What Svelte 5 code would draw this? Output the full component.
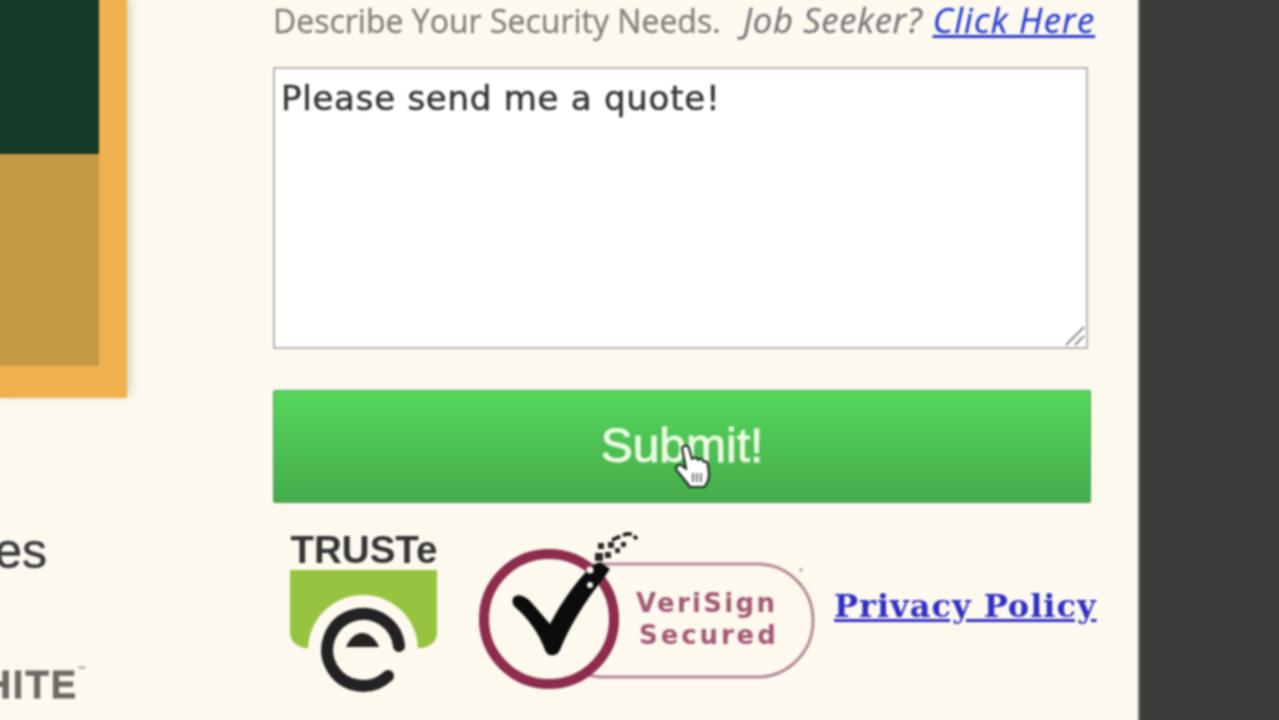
<script>
  let message = $state('Please send me a quote!')
</script>

<div class="page">
  <main class="panel">
    <aside class="side">
      <div class="promo">
        <div class="promo-dark"></div>
        <div class="promo-tan"></div>
      </div>
      <div class="side-label"><span>Services</span></div>
      <div class="side-brand"><span>WHITE<sup>™</sup></span></div>
    </aside>

    <form class="form" onsubmit={(e) => e.preventDefault()}>
      <p class="prompt">Describe Your Security Needs. <em>Job Seeker?</em> <a href="#jobs">Click Here</a></p>

      <div class="field">
        <textarea bind:value={message} aria-label="Security needs"></textarea>
        <svg class="grip" viewBox="0 0 20 20" aria-hidden="true">
          <path d="M1 19 19 1M10 19 19 10" />
        </svg>
      </div>

      <div class="submit-wrap">
        <button class="submit" type="submit">Submit!</button>
        <svg class="cursor" viewBox="0 0 36 48" aria-hidden="true">
          <path d="M8 6c1-3 6-3 7 0l3 11c2-2 5-2 6 1 2-2 5-1 6 2 2-1 4 0 4 3l1 9c0 6-2 10-5 13H16C12 40 8 34 3 29c-2-3 0-7 3-6 2 0 4 2 6 4Z" />
          <path class="lines" d="M19 31v9M23 31v9M27 31v9" />
        </svg>
      </div>

      <div class="seals">
        <div class="truste">
          <div class="truste-name">TRUSTe</div>
          <svg class="truste-mark" viewBox="0 0 148 122" aria-hidden="true">
            <path class="truste-green" d="M0 0h147v62c0 9-6 15-16 16H16C6 77 0 71 0 62Z" />
            <path class="truste-arch" d="M18 80a55 55 0 0 1 110 0Z" />
            <path class="truste-e" d="M109 76A36 36 0 1 0 98 106" />
            <path class="truste-dome" d="M56 77c4-9 10-14 16-14 7 0 14 6 17 14Z" />
          </svg>
        </div>

        <svg class="verisign" viewBox="0 0 340 162" aria-hidden="true">
          <rect class="vs-pill" x="70" y="33" width="265" height="113" rx="56" />
          <circle class="vs-ring" cx="71" cy="88" r="65" />
          <path class="vs-tick" d="M36 66c5-4 12 0 17 5l19 22c12-23 28-45 42-58l8-4 10 7c-6 9-12 16-17 23-13 18-25 38-33 58-3 7-13 7-15 0-6-17-17-32-31-44-2-3-2-7 0-9Z" />
          <g class="vs-dots">
            <rect x="117" y="22" width="8" height="8" /><rect x="127" y="21" width="6" height="6" />
            <rect x="120" y="12" width="6" height="6" /><rect x="130" y="11" width="6" height="6" />
            <rect x="137" y="17" width="5" height="5" /><rect x="143" y="11" width="5" height="5" />
          </g>
          <path class="vs-squiggle" d="M134 9l14-6 6 0 5 5" />
          <circle class="vs-hole" cx="112" cy="39" r="3.5" />
          <circle class="vs-hole" cx="112" cy="54" r="3" />
          <circle class="vs-reg" cx="323" cy="39" r="2" />
        </svg>
        <div class="vs-text"><span>VeriSign</span><span class="secured">Secured</span></div>

        <a class="privacy" href="#privacy">Privacy Policy</a>
      </div>
    </form>
  </main>
  <div class="rail"></div>
</div>

<style>
  :global(body) {
    margin: 0;
    overflow: hidden;
    background: #3c3c3b;
  }

  /* oversized by 4px each way so the blur doesn't fade out at the window edge */
  .page {
    display: flex;
    width: 1287px;
    height: 728px;
    margin: -4px;
    overflow: hidden;
    filter: blur(0.8px);
  }

  .panel {
    display: flex;
    width: 1142px;
    height: 728px;
    background: #fdf9ef;
    border-right: 2px solid #77756f;
    flex: none;
  }

  .rail {
    flex: 1;
    background: #3c3c3b;
  }

  .side {
    display: flex;
    flex-direction: column;
    width: 131px;
    flex: none;
    font-family: "Liberation Sans", Arial, sans-serif;
  }

  .promo {
    height: 402px;
    padding-right: 28px;
    background: #efb14e;
    box-sizing: border-box;
    box-shadow: 5px 0 10px -3px rgba(90, 80, 50, 0.3);
  }

  .promo-dark {
    height: 158px;
    background: #163a28;
  }

  .promo-tan {
    height: 212px;
    background: #c49a44;
  }

  .side-label {
    display: flex;
    justify-content: flex-end;
    width: 51px;
    margin-top: 125px;
    overflow: hidden;
    font-size: 50px;
    line-height: 56px;
    color: #3b3b3d;
    white-space: nowrap;
    -webkit-text-stroke: 0.5px #3b3b3d;
  }

  .side-brand {
    display: flex;
    justify-content: flex-end;
    width: 90px;
    margin-top: 85px;
    overflow: hidden;
    font-size: 38px;
    line-height: 42px;
    font-weight: 700;
    letter-spacing: 2px;
    color: #6d6a66;
    white-space: nowrap;
    -webkit-text-stroke: 0.8px #6d6a66;
  }

  .side-brand sup {
    font-size: 8px;
    line-height: 0;
    vertical-align: 26px;
    letter-spacing: 0;
    -webkit-text-stroke: 0;
  }

  .form {
    flex: 1;
    padding-top: 4px;
    padding-left: 146px;
    padding-right: 48px;
    font-family: "Liberation Sans", Arial, sans-serif;
  }

  .prompt {
    margin: 1px 0 0;
    font-family: "Open Sans", "Liberation Sans", sans-serif;
    font-size: 32px;
    line-height: 38px;
    color: #807f7c;
    white-space: nowrap;
    -webkit-text-stroke: 0.3px #807f7c;
  }

  .prompt em {
    margin-left: 14px;
    font-size: 34.5px;
    letter-spacing: 0.7px;
    color: #77767a;
  }

  .prompt a {
    margin-left: 2px;
    font-size: 34.5px;
    font-style: italic;
    letter-spacing: 1.2px;
    color: #2a3fd0;
    -webkit-text-stroke: 0.3px #2a3fd0;
  }

  .field {
    position: relative;
    margin-top: 27px;
    width: 815px;
    height: 282px;
  }

  textarea {
    display: block;
    box-sizing: border-box;
    width: 100%;
    height: 100%;
    margin: 0;
    padding: 6px 6px;
    border: 2px solid #b5b4b0;
    border-radius: 0;
    outline: none;
    resize: none;
    background: #fff;
    font-family: "DejaVu Sans", sans-serif;
    font-size: 34px;
    line-height: 46px;
    letter-spacing: 0.75px;
    color: #353535;
    -webkit-text-stroke: 0.5px #353535;
  }

  .grip {
    position: absolute;
    right: 3px;
    bottom: 3px;
    width: 20px;
    height: 20px;
  }

  .grip path {
    fill: none;
    stroke: #8e8d8a;
    stroke-width: 2;
  }

  .submit-wrap {
    position: relative;
    margin-top: 41px;
    width: 818px;
    height: 113px;
  }

  .submit {
    display: block;
    width: 100%;
    height: 100%;
    padding: 0 0 2px;
    border: 1px solid #4e9a55;
    border-radius: 2px;
    background: linear-gradient(#55d75b, #45ab4b);
    font-family: "Liberation Sans", Arial, sans-serif;
    font-size: 48px;
    color: #eefae4;
    -webkit-text-stroke: 0.9px #eefae4;
  }

  .cursor {
    position: absolute;
    left: 401px;
    top: 52px;
    width: 36px;
    height: 48px;
  }

  .cursor path {
    fill: #fff;
    stroke: #1d2a20;
    stroke-width: 2.2;
    stroke-linejoin: round;
  }

  .cursor .lines {
    fill: none;
    stroke: #777;
    stroke-width: 2;
  }

  .seals {
    position: relative;
    display: flex;
    align-items: flex-start;
    margin-top: 28px;
    height: 170px;
  }

  .truste {
    width: 148px;
    margin-left: 17px;
    flex: none;
  }

  .truste-name {
    font-size: 38.5px;
    line-height: 38px;
    font-weight: 700;
    text-align: center;
    color: #333;
    white-space: nowrap;
  }

  .truste-mark {
    display: block;
    width: 148px;
    height: 122px;
    margin-top: 1px;
  }

  .truste-green {
    fill: #97c440;
  }

  .truste-arch {
    fill: #fdf9ef;
  }

  .truste-e {
    fill: none;
    stroke: #222;
    stroke-width: 12;
    stroke-linecap: round;
  }

  .truste-dome {
    fill: #222;
  }

  .verisign {
    width: 340px;
    height: 162px;
    margin-left: 40px;
    flex: none;
  }

  .vs-pill {
    fill: none;
    stroke: #b58a99;
    stroke-width: 3;
  }

  .vs-ring {
    fill: #fdf9ef;
    stroke: #8e2c4e;
    stroke-width: 10;
  }

  .vs-tick {
    fill: #0c0c0c;
  }

  .vs-dots rect {
    fill: #2a2a2a;
  }

  .vs-squiggle {
    fill: none;
    stroke: #111;
    stroke-width: 3.5;
    stroke-dasharray: 9 3;
  }

  .vs-hole {
    fill: #fdf9ef;
  }

  .vs-reg {
    fill: #c9b3ac;
  }

  .vs-text {
    position: absolute;
    left: 363px;
    top: 56px;
    display: flex;
    flex-direction: column;
    font-family: "DejaVu Sans", sans-serif;
    font-size: 26px;
    line-height: 32px;
    font-weight: 700;
    letter-spacing: 2.3px;
    color: #a35a75;
  }

  .secured {
    margin-left: 3px;
    letter-spacing: 2.9px;
  }

  .privacy {
    position: absolute;
    left: 561px;
    top: 55px;
    font-family: "DejaVu Serif", serif;
    font-size: 32px;
    line-height: 40px;
    font-weight: 700;
    letter-spacing: 1px;
    color: #2f2fc4;
    white-space: nowrap;
  }
</style>
